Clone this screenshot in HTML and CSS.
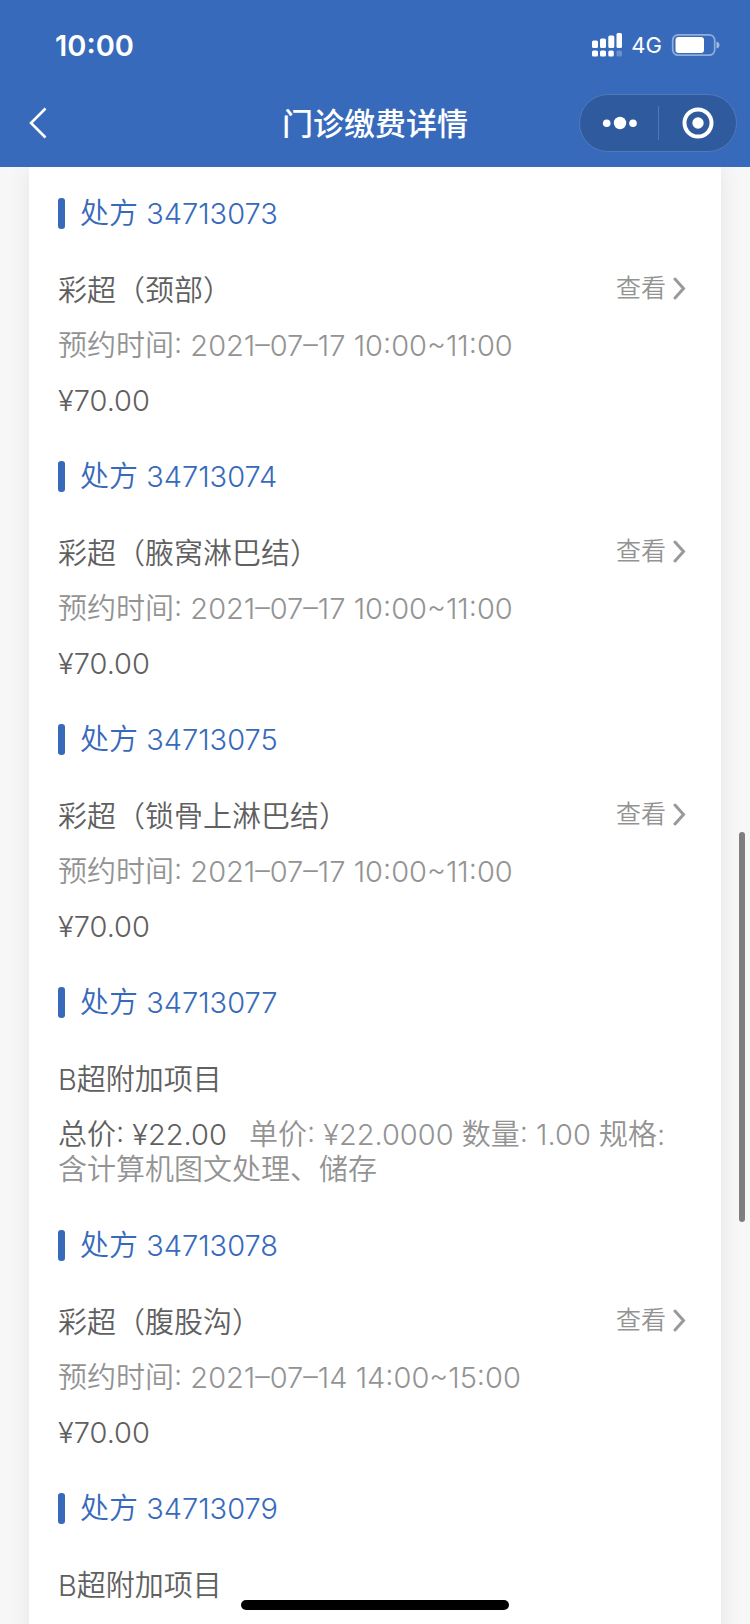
FILE: index.html
```html
<!DOCTYPE html>
<html lang="zh-CN">
<head>
<meta charset="utf-8">
<meta name="viewport" content="width=device-width, initial-scale=1">
<title>门诊缴费详情</title>
<link rel="stylesheet" href="styles.css">
</head>
<body>
<div class="app">
  <header class="top">
    <div class="status">
      <span class="clock">10:00</span>
      <div class="status-right">
        <svg class="signal" width="32" height="26" viewBox="0 0 32 26" fill="#fff" aria-hidden="true">
          <rect x="1" y="8.500" width="6" height="7.500" rx="1.500"/><rect x="9" y="6.500" width="6" height="9.500" rx="1.500"/><rect x="17.300" y="3.500" width="6" height="12.500" rx="1.500"/><rect x="25.500" y="1" width="5.500" height="15" rx="1.500"/>
          <rect x="1" y="18.500" width="6" height="6" rx="1.500"/><rect x="9" y="18.500" width="6" height="6" rx="1.500"/><rect x="17.300" y="18.500" width="5.500" height="6" rx="1.500"/><rect x="25.500" y="18.500" width="5.500" height="6" rx="1.500" opacity=".25"/>
        </svg>
        <span class="network">4G</span>
        <svg class="battery" width="49" height="24" viewBox="0 0 49 24" aria-hidden="true">
          <rect x="1.700" y="1.800" width="42" height="20.400" rx="5.500" fill="none" stroke="#fff" stroke-opacity=".45" stroke-width="1.700"/>
          <rect x="4.500" y="4" width="28.500" height="16" rx="3" fill="#fff"/>
          <path d="M45.500 8.500c4 1 4 6 0 7z" fill="#fff" opacity=".55"/>
        </svg>
      </div>
    </div>
    <div class="nav">
      <button class="back" type="button" aria-label="返回">
        <svg width="18" height="32" viewBox="0 0 18 32" fill="none" stroke="#fff" stroke-width="2.600"><path d="M16.500 1.500 2 16l14.500 14.500"/></svg>
      </button>
      <h1 class="title">门诊缴费详情</h1>
      <div class="capsule">
        <button class="capsule-btn" type="button" aria-label="更多">
          <svg width="36" height="14" viewBox="0 0 36 14" fill="#fff"><circle cx="5.700" cy="7.300" r="3.800"/><circle cx="19" cy="7" r="6.200"/><circle cx="32" cy="7.300" r="3.800"/></svg>
        </button>
        <button class="capsule-btn capsule-close" type="button" aria-label="关闭">
          <svg width="32" height="32" viewBox="0 0 32 32" fill="none"><circle cx="16" cy="16" r="13.500" stroke="#fff" stroke-width="4"/><circle cx="16" cy="16" r="5.700" fill="#fff"/></svg>
        </button>
      </div>
    </div>
  </header>

  <main class="scroll">
    <div class="card">
      <section class="rx">
        <h2 class="rx-no">处方 34713073</h2>
        <div class="item">
          <div class="row"><span>彩超（颈部）</span><a class="view" href="#">查看<svg class="chev" width="14" height="24" viewBox="0 0 14 24"><path d="M2 2 10.500 11.500 2 21"/></svg></a></div>
          <p class="time">预约时间: 2021–07–17 10:00~11:00</p>
          <p>¥70.00</p>
        </div>
      </section>
      <section class="rx">
        <h2 class="rx-no">处方 34713074</h2>
        <div class="item">
          <div class="row"><span>彩超（腋窝淋巴结）</span><a class="view" href="#">查看<svg class="chev" width="14" height="24" viewBox="0 0 14 24"><path d="M2 2 10.500 11.500 2 21"/></svg></a></div>
          <p class="time">预约时间: 2021–07–17 10:00~11:00</p>
          <p>¥70.00</p>
        </div>
      </section>
      <section class="rx">
        <h2 class="rx-no">处方 34713075</h2>
        <div class="item">
          <div class="row"><span>彩超（锁骨上淋巴结）</span><a class="view" href="#">查看<svg class="chev" width="14" height="24" viewBox="0 0 14 24"><path d="M2 2 10.500 11.500 2 21"/></svg></a></div>
          <p class="time">预约时间: 2021–07–17 10:00~11:00</p>
          <p>¥70.00</p>
        </div>
      </section>
      <section class="rx">
        <h2 class="rx-no">处方 34713077</h2>
        <div class="item">
          <div class="row"><span>B超附加项目</span></div>
          <p class="detail"><span class="total">总价: ¥22.00</span>单价: ¥22.0000 数量: 1.00 规格: 含计算机图文处理、储存</p>
        </div>
      </section>
      <section class="rx">
        <h2 class="rx-no">处方 34713078</h2>
        <div class="item">
          <div class="row"><span>彩超（腹股沟）</span><a class="view" href="#">查看<svg class="chev" width="14" height="24" viewBox="0 0 14 24"><path d="M2 2 10.500 11.500 2 21"/></svg></a></div>
          <p class="time">预约时间: 2021–07–14 14:00~15:00</p>
          <p>¥70.00</p>
        </div>
      </section>
      <section class="rx">
        <h2 class="rx-no">处方 34713079</h2>
        <div class="item">
          <div class="row"><span>B超附加项目</span></div>
        </div>
      </section>
    </div>
  </main>
  <div class="scrollbar"></div>
  <div class="home"></div>
</div>
</body>
</html>
```
FILE: styles.css
```css
* { box-sizing: border-box; }
body, h1, h2, p { margin: 0; font-weight: 350; }
body {
  font-family: Inter, "Noto Sans CJK SC", sans-serif;
  font-size: 29px;
  line-height: 35px;
  color: #606060;
  background: #f7f7f7;
}
button { padding: 0; border: 0; background: none; display: flex; align-items: center; justify-content: center; }
svg { display: block; flex: none; }

.app { position: relative; height: 100vh; display: flex; flex-direction: column; overflow: hidden; }

.top { flex: none; color: #fff; background: #386abb; }
.status { display: flex; justify-content: space-between; align-items: center; height: 90px; padding: 0 30px 0 55px; }
.clock { font-weight: 600; font-size: 29px; }
.status-right { display: flex; align-items: center; }
.network { margin: 0 9px 0 8px; font-size: 22px; font-weight: 400; }

.nav { display: grid; grid-template-columns: 1fr auto 1fr; align-items: center; height: 77px; padding: 0 13px 11px; }
.back { justify-self: start; height: 44px; margin-left: 16px; }
.title { font-size: 31px; font-weight: 500; }
.capsule { justify-self: end; display: flex; align-items: center; height: 58px; border: 1px solid #5179b9; border-radius: 29px; background: #2f5a9d; }
.capsule-btn { width: 78px; height: 34px; }
.capsule-btn + .capsule-btn { border-left: 1px solid #5179b9; }

.scroll { flex: 1; min-height: 0; overflow: hidden; }
.card { min-height: 100%; margin: 0 29px; padding: 29px 29px 0; background: #fff; box-shadow: 0 0 20px rgba(0, 0, 0, .08); }
.rx { padding-bottom: 41px; }
.rx-no { display: flex; align-items: center; gap: 15px; margin-bottom: 42px; font-size: 29px; color: #386abb; }
.rx-no::before { content: ""; width: 7px; height: 31px; border-radius: 3px; background: #386abb; }
.item { display: flex; flex-direction: column; gap: 20px; }
.row { display: flex; justify-content: space-between; align-items: center; }
.view { display: flex; align-items: center; gap: 7px; margin-right: 5px; margin-bottom: 4px; line-height: 31px; font-size: 25px; color: #939393; text-decoration: none; }
.chev { fill: none; stroke: #999; stroke-width: 3; stroke-linecap: round; }
.time, .detail { color: #939393; }
.total { margin-right: 22px; color: #606060; }

.scrollbar { position: absolute; right: 5px; top: 832px; width: 6px; height: 390px; border-radius: 3px; background: #7e7e7e; }
.home { position: absolute; left: 50%; bottom: 14px; width: 268px; height: 10px; margin-left: -134px; border-radius: 5px; background: #000; }
```
